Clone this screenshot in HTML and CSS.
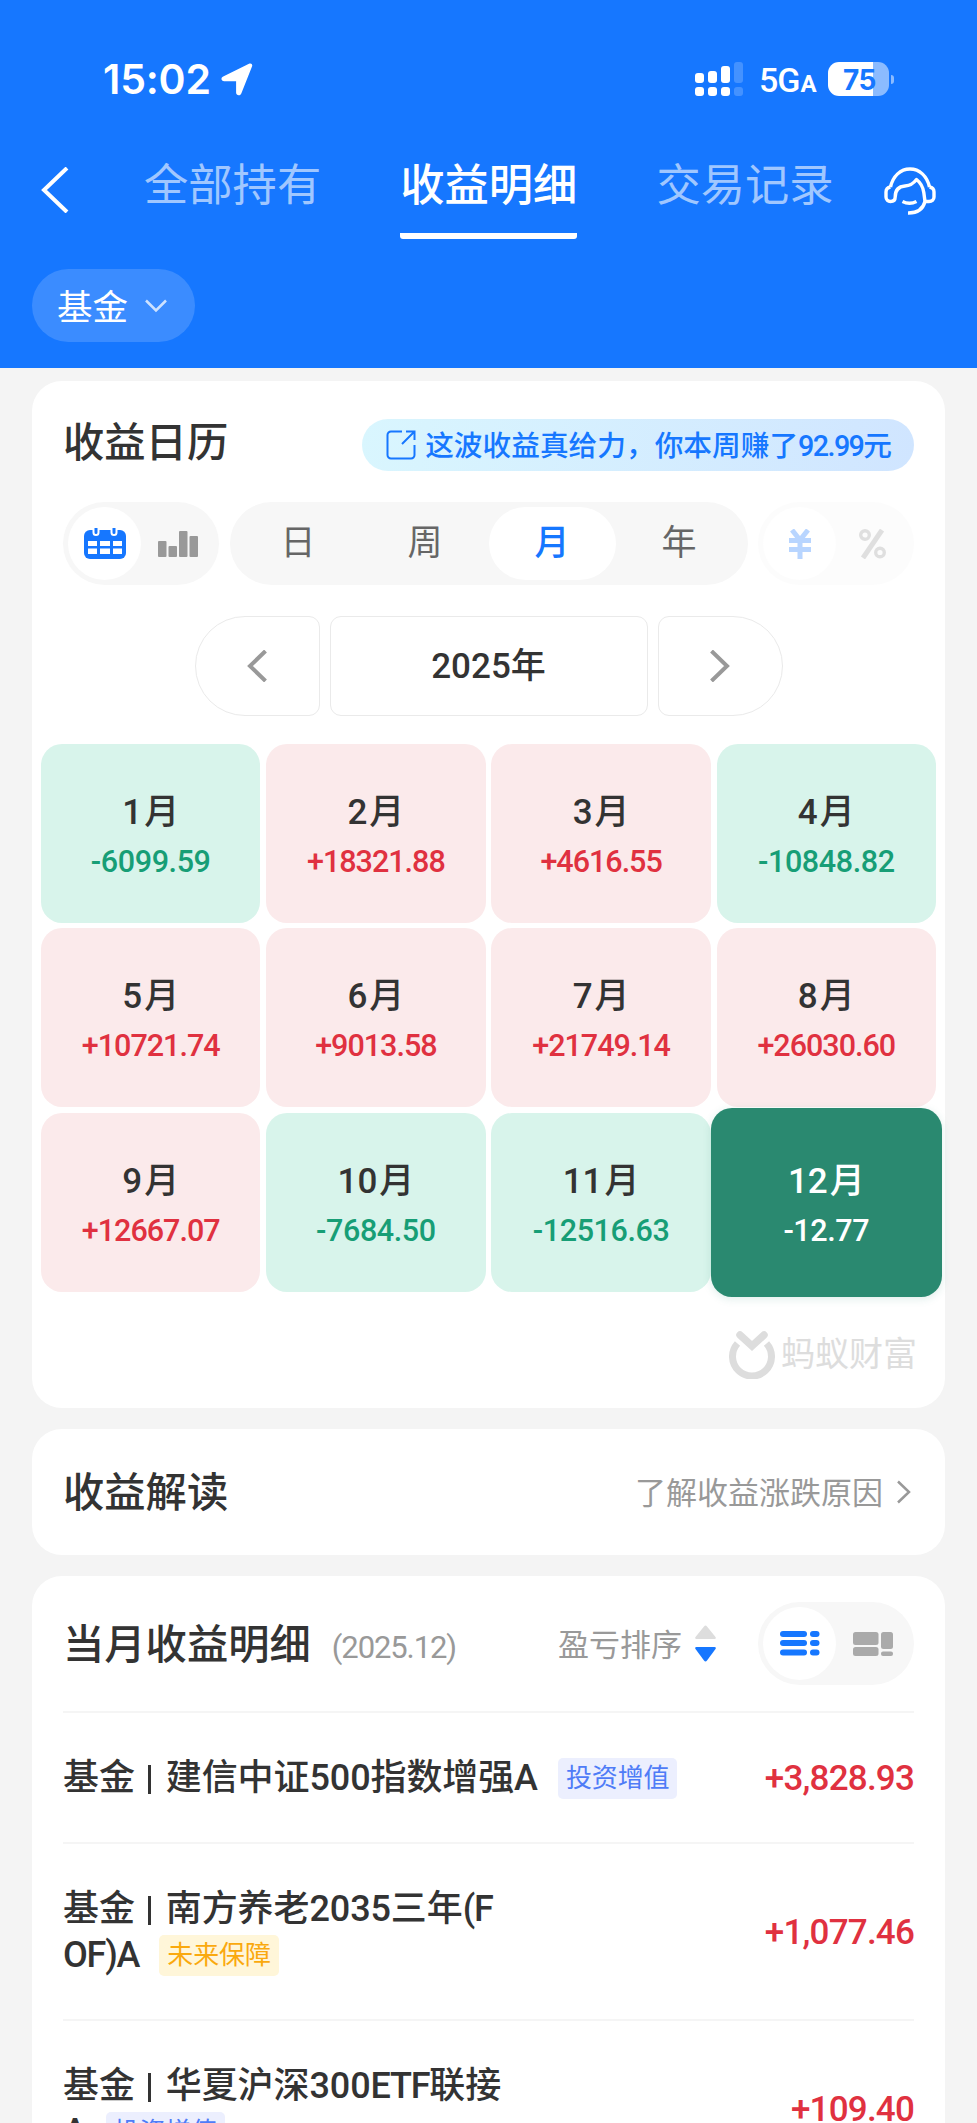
FILE: index.html
```html
<!DOCTYPE html>
<html lang="zh-CN">
<head>
    <meta charset="UTF-8">
    <meta name="viewport" content="width=device-width, initial-scale=1.0">
    <title>收益明细</title>
    <link rel="stylesheet" href="styles.css">
</head>
<body>
    <header class="header">
        <div class="status-bar">
            <span class="time">15:02</span>
            <svg class="location" width="32" height="33" viewBox="0 0 32 33"><path d="M2.2 13.6 28 .7c2.2-1 3.900.6 3 2.900L20.300 30.400c-1.200 2.800-5.200 2.300-5.200-.8V18.200H3.200C.200 18.200-.6 15 2.200 13.600z" fill="#fff"/></svg>
            <svg class="signal" width="48" height="34" viewBox="0 0 48 34" fill="#fff">
                <rect x="0" y="11" width="9" height="10" rx="3"/>
                <rect x="13" y="9" width="9" height="12" rx="3"/>
                <rect x="26" y="4" width="9" height="17" rx="3"/>
                <rect x="39" y="0" width="9" height="21" rx="3" opacity=".2"/>
                <rect x="0" y="25" width="9" height="9" rx="3"/>
                <rect x="13" y="25" width="9" height="9" rx="3"/>
                <rect x="26" y="25" width="9" height="9" rx="3"/>
                <rect x="39" y="25" width="9" height="9" rx="3" opacity=".2"/>
            </svg>
            <span class="network">5G<small>A</small></span>
            <span class="battery">75</span>
            <span class="battery-tip"></span>
        </div>
        <nav class="tabs">
            <svg class="back" width="28" height="46" viewBox="0 0 28 46"><path d="M26 1 3 23l23 22" fill="none" stroke="#fff" stroke-width="4"/></svg>
            <a class="tab">全部持有</a>
            <a class="tab active">收益明细</a>
            <a class="tab">交易记录</a>
            <svg class="service" width="52" height="48" viewBox="0 0 52 48" fill="none" stroke="#fff" stroke-width="3.400" stroke-linejoin="round">
                <path d="M6.500 20C9 9 16.500 2 26 2s17 7 19.500 18"/>
                <path d="M6.500 20C3.500 20.500 2 22.500 2 25v5c0 2.500 2 4.500 4.500 4.500 3 0 4.700-1.500 4.700-4.500 0-6.500 3.300-10.500 9.800-11 5.500-.3 8-2 11.500-6.500 4.500 3.500 6.500 7.500 7.300 13l1.200 9H45c3 0 5-2 5-4.500v-5c0-2.500-1.500-4.500-4.500-5"/>
                <path d="M41 34.500C39 42 33.500 46.200 24 46"/>
                <path d="M18.500 34.500q7 3.500 14 0"/>
            </svg>
        </nav>
        <div class="filter"><span>基金</span>
            <svg width="22" height="14" viewBox="0 0 22 14"><path d="m1 1.500 10 10 10-10" fill="none" stroke="#fff" stroke-opacity=".75" stroke-width="2.500"/></svg>
        </div>
    </header>

    <main class="content">
        <section class="card calendar-card">
            <div class="card-head">
                <h2>收益日历</h2>
                <div class="share">
                    <svg width="30" height="30" viewBox="0 0 30 30" fill="none" stroke="#1677ff" stroke-width="2"><path d="M16 1.500H5A3.500 3.500 0 0 0 1.500 5v20A3.500 3.500 0 0 0 5 28.500h20a3.500 3.500 0 0 0 3.500-3.500V15M16 14 28 2M20 1.500h8.500V10"/></svg>
                    <span>这波收益真给力，你本周赚了<em>92.99</em>元</span>
                </div>
            </div>

            <div class="toolbar">
                <div class="segment icons">
                    <span class="item active">
                        <svg width="42" height="32" viewBox="0 0 42 32">
                            <rect x="0" y="2" width="42" height="29" rx="6" fill="#1677ff"/>
                            <path d="M9.500 0v4.500a2.500 2.500 0 0 0 5 0V0M27.500 0v4.500a2.500 2.500 0 0 0 5 0V0" fill="#1677ff" stroke="#fff" stroke-width="2"/>
                            <path d="M4 13h9v5H4zM16 13h10v5H16zM29 13h9v5h-9zM4 20.500h9V26H4zM16 20.500h10V26H16zM29 20.500h9V26h-9z" fill="#fff"/>
                        </svg>
                    </span>
                    <span class="item">
                        <svg width="40" height="28" viewBox="0 0 40 28" fill="#999"><rect x="0" y="11" width="8.500" height="16" rx="1"/><rect x="10.500" y="16" width="8.500" height="11" rx="1"/><rect x="21" y="1" width="8.500" height="26" rx="1"/><rect x="31.500" y="6" width="8.500" height="21" rx="1"/></svg>
                    </span>
                </div>
                <div class="segment period">
                    <span class="item">日</span>
                    <span class="item">周</span>
                    <span class="item active">月</span>
                    <span class="item">年</span>
                </div>
                <div class="segment icons disabled">
                    <span class="item active">
                        <svg width="24" height="30" viewBox="0 0 24 30" fill="none" stroke="#1677ff" stroke-width="5"><path d="m4 1 8 10 8-10M12 10v20M1 11.500h22M1 20.500h22"/></svg>
                    </span>
                    <span class="item">
                        <svg width="27" height="30" viewBox="0 0 27 30" fill="none" stroke="#999"><circle cx="6" cy="6" r="4.300" stroke-width="3.400"/><circle cx="21" cy="23.500" r="4.300" stroke-width="3.400"/><path d="M23 1 4 29" stroke-width="5"/></svg>
                    </span>
                </div>
            </div>

            <div class="year-nav">
                <span class="prev"><svg width="20" height="32" viewBox="0 0 20 32"><path d="M18.500 1 3 16l15.500 15" fill="none" stroke="#999" stroke-width="4"/></svg></span>
                <span class="year">2025年</span>
                <span class="next"><svg width="20" height="32" viewBox="0 0 20 32"><path d="M1.500 1 17 16 1.500 31" fill="none" stroke="#999" stroke-width="4"/></svg></span>
            </div>

            <div class="months">
                <div class="month down"><b>1<i>月</i></b><span>-6099.59</span></div>
                <div class="month up"><b>2<i>月</i></b><span>+18321.88</span></div>
                <div class="month up"><b>3<i>月</i></b><span>+4616.55</span></div>
                <div class="month down"><b>4<i>月</i></b><span>-10848.82</span></div>
                <div class="month up"><b>5<i>月</i></b><span>+10721.74</span></div>
                <div class="month up"><b>6<i>月</i></b><span>+9013.58</span></div>
                <div class="month up"><b>7<i>月</i></b><span>+21749.14</span></div>
                <div class="month up"><b>8<i>月</i></b><span>+26030.60</span></div>
                <div class="month up"><b>9<i>月</i></b><span>+12667.07</span></div>
                <div class="month down"><b>10<i>月</i></b><span>-7684.50</span></div>
                <div class="month down"><b>11<i>月</i></b><span>-12516.63</span></div>
                <div class="month current"><b>12<i>月</i></b><span>-12.77</span></div>
            </div>

            <div class="brand">
                <svg width="46" height="48" viewBox="0 0 46 48" fill="none" stroke="#ddd">
                    <path d="M8.500 12.500a19.500 19.500 0 1 0 29 0" stroke-width="7"/>
                    <path d="m11 4 12 11L35 4" stroke-width="7.500" stroke-linecap="round"/>
                </svg>
                <span>蚂蚁财富</span>
            </div>
        </section>

        <section class="card insight">
            <h2>收益解读</h2>
            <a class="more"><span>了解收益涨跌原因</span>
                <svg width="15" height="24" viewBox="0 0 15 24"><path d="m2 1.500 11 10.500L2 22.500" fill="none" stroke="#999" stroke-width="2.500"/></svg>
            </a>
        </section>

        <section class="card detail">
            <div class="detail-head">
                <h2>当月收益明细</h2>
                <span class="date">(2025.12)</span>
                <span class="sort">盈亏排序</span>
                <svg class="sort-icon" width="21" height="37" viewBox="0 0 21 37"><path d="M9 1.500q1.500-2 3 0l8.500 10.500q1 2-1 2h-18q-2 0-1-2z" fill="#ddd"/><path d="M9 35.500q1.500 2 3 0L20.500 24q1-2-1-2h-18q-2 0-1 2z" fill="#1677ff"/></svg>
                <div class="segment icons">
                    <span class="item active">
                        <svg width="40" height="25" viewBox="0 0 40 25" fill="#1677ff"><rect width="27" height="6" rx="3"/><rect x="30" width="9.500" height="6" rx="3"/><rect y="9" width="27" height="6" rx="3"/><rect x="30" y="9" width="9.500" height="6" rx="3"/><rect y="18.500" width="27" height="6" rx="3"/><rect x="30" y="18.500" width="9.500" height="6" rx="3"/></svg>
                    </span>
                    <span class="item">
                        <svg width="40" height="24" viewBox="0 0 40 24" fill="#aaa"><rect width="25.500" height="13" rx="2.500"/><rect y="15" width="25.500" height="9" rx="2.500"/><rect x="28" width="12" height="17" rx="2.500"/><rect x="28" y="19.500" width="12" height="4.500" rx="2"/></svg>
                    </span>
                </div>
            </div>
            <div class="fund">
                <div class="name">基金<i></i>建信中证500指数增强A<span class="tag invest">投资增值</span></div>
                <div class="amount">+3,828.93</div>
            </div>
            <div class="fund">
                <div class="name">基金<i></i>南方养老2035三年<em>(F</em><br><em>OF)A</em><span class="tag future">未来保障</span></div>
                <div class="amount">+1,077.46</div>
            </div>
            <div class="fund">
                <div class="name">基金<i></i>华夏沪深300<em>ETF</em>联接<br><em>A</em><span class="tag invest">投资增值</span></div>
                <div class="amount">+109.40</div>
            </div>
        </section>
    </main>
</body>
</html>
```
FILE: styles.css
```css
:root {
    --blue: #1677ff;
    --text: #333;
    --gray: #999;
    --red: #e03140;
    --green: #179e76;
}

* {
    margin: 0;
    padding: 0;
    box-sizing: border-box;
}

html, body {
    height: 2123px;
    overflow: hidden;
}

body {
    font-family: Roboto, "Noto Sans CJK SC", sans-serif;
    color: var(--text);
    background: #f4f4f4;
}

svg {
    display: block;
    flex-shrink: 0;
}

i, em {
    font-style: normal;
}

/* Header */
.header {
    height: 368px;
    background: var(--blue);
    color: #fff;
}

.status-bar {
    height: 137px;
    padding: 21px 83px 0 103px;
    display: flex;
    align-items: center;
}

.time {
    width: 118px;
    padding-top: 1px;
    font: 600 41px/1 Inter, sans-serif;
    letter-spacing: -0.2px;
}

.signal {
    margin-left: auto;
}

.network {
    width: 55px;
    margin: 1px 14px 0 16px;
    font: 500 34px/1 Roboto, sans-serif;
    letter-spacing: -1px;
    white-space: nowrap;
}

.network small {
    margin-left: 1px;
    font-size: 24px;
    font-weight: 700;
}

.battery {
    width: 61px;
    height: 34px;
    border-radius: 11px;
    padding: 1px 6px 0 8px;
    background: linear-gradient(to right, #fff 45px, rgba(255,255,255,0.5) 45px);
    color: var(--blue);
    font: 700 28px/34px Inter, sans-serif;
    letter-spacing: -0.5px;
    text-align: center;
}

.battery-tip {
    width: 3px;
    height: 9px;
    margin-left: 2px;
    border-radius: 0 4px 4px 0;
    background: rgba(255,255,255,0.5);
}

.tabs {
    height: 102px;
    padding-left: 41px;
    display: flex;
    align-items: flex-start;
}

.tab {
    flex-shrink: 0;
    height: 102px;
    font-size: 44.300px;
    line-height: 99px;
    color: rgba(255,255,255,0.6);
    margin-right: 79px;
    white-space: nowrap;
}

.back {
    margin: 30px 75px 0 0;
}

.tab.active {
    color: #fff;
    font-weight: 500;
    border-bottom: 6px solid #fff;
    border-radius: 3px;
}

.service {
    margin: 30px 0 0 -29px;
}

.filter {
    width: 163px;
    height: 73px;
    margin: 30px 0 0 32px;
    padding-left: 25px;
    border-radius: 37px;
    background: rgba(255,255,255,0.16);
    display: flex;
    align-items: center;
    gap: 17px;
    font-size: 35.500px;
}

.filter span {
    padding-bottom: 3px;
}

/* Cards */
.content {
    padding: 13px 32px 0;
    display: flex;
    flex-direction: column;
    gap: 21px;
}

.card {
    width: 913px;
    background: #fff;
    border-radius: 30px;
    flex-shrink: 0;
}

h2 {
    padding-top: 2px;
    font-size: 41.300px;
    font-weight: 500;
    line-height: 60px;
}

.calendar-card {
    height: 1027px;
    padding-top: 30px;
}

.card-head {
    height: 91px;
    padding: 0 31px;
    display: flex;
    justify-content: space-between;
    align-items: flex-start;
}

.share {
    height: 52px;
    margin-top: 8px;
    padding: 0 22px 0 24px;
    border-radius: 26px;
    background: linear-gradient(100deg, #d9f6fe, #d0e5ff);
    color: var(--blue);
    display: flex;
    align-items: center;
    gap: 9px;
    font-size: 28.700px;
    font-weight: 500;
    white-space: nowrap;
}

.share span {
    padding-bottom: 3px;
}

.share em {
    letter-spacing: -1.6px;
}

.toolbar {
    padding: 0 31px;
    display: flex;
    justify-content: space-between;
}

.segment {
    height: 83px;
    border-radius: 42px;
    background: #f7f7f7;
    padding: 5px;
    display: flex;
    font-size: 35px;
    line-height: 73px;
    color: #666;
}

.segment .item {
    flex: 1;
    display: flex;
    align-items: center;
    justify-content: center;
    border-radius: 37px;
}

.segment .active {
    background: #fff;
    color: var(--blue);
    font-weight: 500;
}

.icons {
    width: 156px;
}

.period {
    width: 518px;
}

.disabled {
    opacity: 0.3;
}

.year-nav {
    margin: 31px 0 28px;
    display: flex;
    justify-content: center;
    gap: 10px;
}

.year-nav span {
    width: 125px;
    height: 100px;
    border: 1px solid #eaeaea;
    border-radius: 11px;
    display: flex;
    align-items: center;
    justify-content: center;
}

.year-nav .year {
    width: 318px;
    padding-bottom: 7px;
    font-size: 35px;
    font-weight: 500;
}

.year-nav .prev {
    border-radius: 50px 11px 11px 50px;
}

.year-nav .next {
    border-radius: 11px 50px 50px 11px;
}

.months {
    padding: 0 9px;
    display: grid;
    grid-template-columns: repeat(4, 1fr);
    grid-auto-rows: 179px;
    gap: 5.300px 5.800px;
}

.month {
    border-radius: 21px;
    display: flex;
    flex-direction: column;
    align-items: center;
    justify-content: center;
    padding-top: 6px;
}

.month b {
    font-size: 35px;
    font-weight: 500;
    line-height: 50px;
}

.month i {
    margin-left: 2px;
}

.month span {
    font-size: 30.500px;
    font-weight: 500;
    line-height: 47px;
    letter-spacing: -0.4px;
}

.up {
    background: #fbeaeb;
}

.up span {
    color: var(--red);
    letter-spacing: -1px;
}

.down {
    background: #d8f4eb;
}

.down span {
    color: var(--green);
}

.current {
    margin: -5px -6px;
    background: #2a8970;
    color: #fff;
    box-shadow: 0 2px 8px rgba(42,137,112,0.15);
}

.brand {
    margin: 38px 28px 0 0;
    display: flex;
    justify-content: flex-end;
    align-items: center;
    gap: 6px;
    font-size: 34px;
    line-height: 48px;
    color: #ddd;
}

.brand span {
    padding-bottom: 2px;
}

.insight {
    height: 126px;
    padding: 0 34px 0 31px;
    display: flex;
    align-items: center;
    justify-content: space-between;
}

.more {
    display: flex;
    align-items: center;
    gap: 13px;
    font-size: 31px;
    color: var(--gray);
}

.more span {
    padding-bottom: 3px;
}

.detail {
    height: 600px;
    padding: 0 31px;
}

.detail-head {
    height: 137px;
    display: flex;
    align-items: center;
    border-bottom: 2px solid #f5f5f5;
}

.date {
    margin: 8px auto 0 21px;
    font-size: 31px;
    color: var(--gray);
    letter-spacing: -1.1px;
}

.sort {
    padding-bottom: 2px;
    font-size: 31px;
    color: var(--gray);
}

.sort-icon {
    margin: 0 42px 0 13px;
}

.fund {
    padding: 42px 0 41px;
    display: flex;
    align-items: center;
    justify-content: space-between;
    border-bottom: 2px solid #f5f5f5;
}

.name {
    font-size: 36px;
    font-weight: 500;
    line-height: 46px;
    letter-spacing: -0.1px;
}

.name em {
    letter-spacing: -1.2px;
}

.name i {
    display: inline-block;
    width: 3px;
    height: 29px;
    margin: 0 15px 0 13px;
    vertical-align: -4px;
    background: var(--text);
}

.tag {
    display: inline-block;
    height: 41px;
    margin: -6px 0 -6px 20px;
    padding: 0 8px;
    border-radius: 5px;
    font-size: 26px;
    font-weight: 400;
    line-height: 41px;
    vertical-align: 3px;
}

.invest {
    background: #eceffe;
    color: #4f7cf7;
}

.future {
    background: #fff6d9;
    color: #faa90f;
}

.amount {
    font-size: 35px;
    font-weight: 500;
    color: var(--red);
    letter-spacing: -0.8px;
}
```
